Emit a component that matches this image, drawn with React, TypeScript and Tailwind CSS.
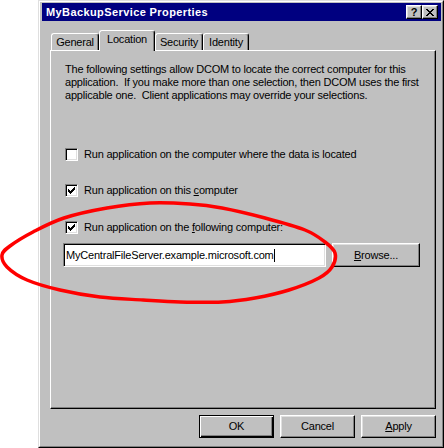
import React from "react";

// raised 3d edge used by buttons and tabs
const raised =
  "border border-t-white border-l-white border-r-black border-b-black shadow-[inset_-1px_-1px_0_#808080,inset_1px_1px_0_#dfdfdf]";

// hand drawn red ring, points picked off the screenshot
const ring = [
  [2, 255], [10, 246], [33, 232], [64, 218], [107, 208], [150, 203],
  [190, 204], [222, 208], [265, 218], [305, 230], [325, 242], [335, 253],
  [332, 267], [319, 278], [289, 290], [255, 298], [222, 302], [180, 302],
  [143, 300], [100, 297], [60, 290], [27, 280], [7, 267],
];

const ringPath = () => {
  const n = ring.length;
  let d = `M${ring[0][0]} ${ring[0][1]}`;
  for (let i = 0; i < n; i++) {
    const p0 = ring[(i - 1 + n) % n];
    const p1 = ring[i];
    const p2 = ring[(i + 1) % n];
    const p3 = ring[(i + 2) % n];
    const c1x = p1[0] + (p2[0] - p0[0]) / 6;
    const c1y = p1[1] + (p2[1] - p0[1]) / 6;
    const c2x = p2[0] - (p3[0] - p1[0]) / 6;
    const c2y = p2[1] - (p3[1] - p1[1]) / 6;
    d += ` C${c1x} ${c1y} ${c2x} ${c2y} ${p2[0]} ${p2[1]}`;
  }
  return d + " Z";
};

// classic 7x7 check mark
const checkRows = [
  [[6, 1]],
  [[5, 2]],
  [[0, 1], [4, 3]],
  [[0, 2], [3, 3]],
  [[0, 5]],
  [[1, 3]],
  [[2, 1]],
];

const Checkbox = ({ checked }: { checked?: boolean }) => (
  <div className="w-[13px] h-[13px] shrink-0 bg-white border border-t-[#808080] border-l-[#808080] border-r-white border-b-white shadow-[inset_1px_1px_0_#000,inset_-1px_-1px_0_#dfdfdf] relative">
    {checked && (
      <svg width="7" height="7" className="absolute left-[2px] top-[2px]" shapeRendering="crispEdges">
        {checkRows.map((row, y) =>
          row.map(([x, w]) => <rect key={`${y}-${x}`} x={x} y={y} width={w} height={1} fill="#000" />)
        )}
      </svg>
    )}
  </div>
);

const Tab = ({ label, width, active }: { label: string; width: string; active?: boolean }) =>
  active ? (
    <div
      className={`${width} h-[21px] -mb-[1px] relative z-10 bg-[#c0c0c0] border-t border-l border-r border-t-white border-l-white border-r-black rounded-t-[3px] shadow-[inset_-1px_0_0_#808080] flex items-center justify-center pb-[4px]`}
    >
      {label}
    </div>
  ) : (
    <div
      className={`${width} h-[17px] border-t border-l border-r border-t-white border-l-white border-r-black rounded-t-[3px] shadow-[inset_-1px_0_0_#808080] flex items-center justify-center`}
    >
      {label}
    </div>
  );

const App = () => {
  return (
    <div className="relative w-[444px] h-[448px] overflow-hidden bg-white font-['Liberation_Sans',Arial,sans-serif] text-[11px] leading-[13px] tracking-[-0.2px] text-black">
      {/* window frame */}
      <div className="ml-[38px] w-[406px] h-[448px] bg-[#c0c0c0] border border-t-[#dfdfdf] border-l-[#dfdfdf] border-r-black border-b-black">
        <div className="h-full flex flex-col border border-t-white border-l-white border-r-[#808080] border-b-[#808080] pt-[1px] pl-[2px] pr-[1px]">
          {/* title bar */}
          <div className="h-[18px] bg-[#000080] flex items-center justify-between pl-[4px] pr-[3px]">
            <span className="text-white font-bold tracking-[0.4px]">MyBackupService Properties</span>
            <div className="flex">
              <div className={`w-[16px] h-[14px] bg-[#c0c0c0] ${raised} flex items-center justify-center font-bold text-[11px] leading-none`}>
                ?
              </div>
              <div className={`w-[16px] h-[14px] bg-[#c0c0c0] ${raised} flex items-center justify-center`}>
                <svg width="8" height="7" shapeRendering="crispEdges">
                  <path d="M0 0h2v1h-2zM6 0h2v1h-2zM1 1h2v1h-2zM5 1h2v1h-2zM2 2h4v1h-4zM3 3h2v1h-2zM2 4h4v1h-4zM1 5h2v1h-2zM5 5h2v1h-2zM0 6h2v1h-2zM6 6h2v1h-2z" fill="#000" />
                </svg>
              </div>
            </div>
          </div>

          {/* tabs */}
          <div className="mt-[9px] ml-[8px] pl-[1px] h-[20px] flex items-end">
            <Tab label="General" width="w-[48px]" />
            <Tab label="Location" width="w-[56px]" active />
            <Tab label="Security" width="w-[48px]" />
            <Tab label="Identity" width="w-[46px]" />
          </div>

          {/* tab page */}
          <div className="ml-[8px] w-[386px] h-[359px] border border-t-white border-l-white border-r-black border-b-black shadow-[inset_-1px_-1px_0_#808080] pt-[12px] pl-[14px]">
            <p className="whitespace-nowrap">
              The following settings allow DCOM to locate the correct computer for this
              <br />
              application.&nbsp; If you make more than one selection, then DCOM uses the first
              <br />
              applicable one.&nbsp; Client applications may override your selections.
            </p>

            <div className="mt-[46px] h-[13px] flex items-center gap-[6px]">
              <Checkbox />
              <span>Run application on the computer where the data is located</span>
            </div>
            <div className="mt-[23px] h-[13px] flex items-center gap-[6px]">
              <Checkbox checked />
              <span>
                Run application on this <u>c</u>omputer
              </span>
            </div>
            <div className="mt-[24px] h-[13px] flex items-center gap-[6px]">
              <Checkbox checked />
              <span>
                Run application on the <u>f</u>ollowing computer:
              </span>
            </div>

            <div className="mt-[9px] -ml-[2px] flex gap-[6px]">
              <div className="w-[263px] h-[24px] bg-white border border-t-[#808080] border-l-[#808080] border-r-white border-b-white shadow-[inset_1px_1px_0_#000,inset_-1px_-1px_0_#dfdfdf] flex items-center pl-[2px]">
                <span>MyCentralFileServer.example.microsoft.com</span>
                <span className="w-[1px] h-[13px] bg-black" />
              </div>
              <div className={`w-[88px] h-[24px] ${raised} flex items-center justify-center`}>
                <span>
                  <u>B</u>rowse...
                </span>
              </div>
            </div>
          </div>

          {/* dialog buttons */}
          <div className="mt-[6px] ml-[8px] w-[386px] flex justify-end gap-[6px]">
            <div className="w-[75px] h-[23px] border border-black shadow-[inset_1px_1px_0_#fff,inset_-1px_-1px_0_#000,inset_-2px_-2px_0_#808080] flex items-center justify-center">
              OK
            </div>
            <div className={`w-[75px] h-[23px] ${raised} flex items-center justify-center`}>Cancel</div>
            <div className={`w-[75px] h-[23px] ${raised} flex items-center justify-center`}>
              <span>
                <u>A</u>pply
              </span>
            </div>
          </div>
        </div>
      </div>

      {/* red annotation ring */}
      <svg className="absolute inset-0 pointer-events-none" width="444" height="448">
        <path d={ringPath()} fill="none" stroke="#ff0000" strokeWidth="3.5" />
      </svg>
    </div>
  );
};

export default App;
